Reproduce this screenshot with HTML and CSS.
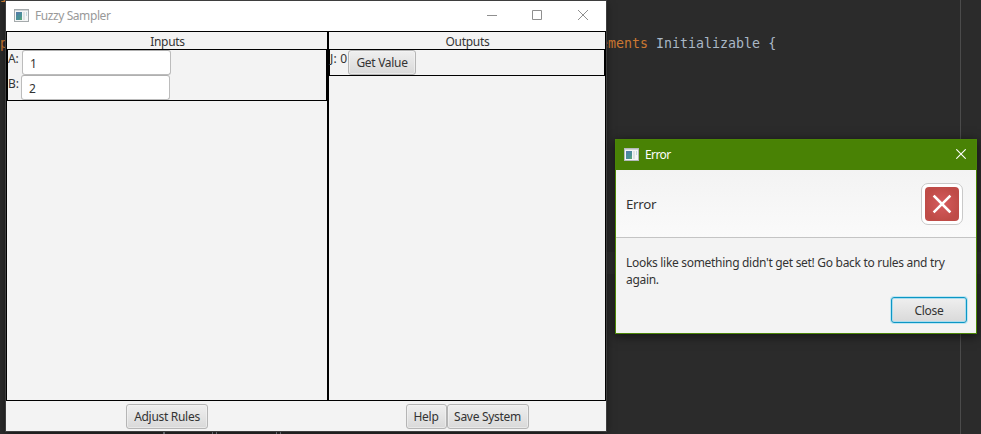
FILE: index.html
```html
<!DOCTYPE html>
<html lang="en">
<head>
<meta charset="utf-8">
<title>Fuzzy Sampler</title>
<link rel="stylesheet" href="styles.css">
</head>
<body>
<main class="desktop">
  <div class="margin-line"></div>
  <div class="code code-top">import</div>
  <div class="code code-left">p</div>
  <div class="code code-right"><span class="keyword">ements</span> Initializable {</div>
  <div class="caret-row"></div>
  <svg class="code-bottom" width="130" height="2" viewBox="0 0 130 2" fill="#858b91"><path d="M8 0h2v2H8zM57 0h1v2h-1zM61 0h1v2h-1zM121 0h1v2h-1zM125 0h1v2h-1z"/></svg>

  <section class="window sampler">
    <header class="titlebar">
      <svg class="app-icon" width="15" height="13" viewBox="0 0 15 13"><rect x=".5" y=".5" width="14" height="12" fill="#f5f6f6" stroke="#a5aaac"/><path d="M1 1.500h13" stroke="#d1d5d7"/><path d="M2 3h6v8H2z" fill="#4b8f98"/><path d="M2 3h6L2 7z" fill="#537fa5"/><path d="M5 11l3-4v4z" fill="#58a27c"/><path d="M9 3h2v8H9z" fill="#dfe3e4"/><path d="M12 3h1v4h-1z" fill="#c5dcdf"/></svg>
      <span class="caption">Fuzzy Sampler</span>
      <svg class="controls" width="102" height="12" viewBox="0 0 102 12" fill="none" stroke="#8f8f8f"><path d="M0 6.500h10M45.500 1.500h9v9h-9zM91 1l10 10M101 1L91 11"/></svg>
    </header>
    <div class="columns">
      <section class="column">
        <h2>Inputs</h2>
        <div class="box inputs">
          <label class="row"><span class="name-a">A:</span><input value="1"></label>
          <label class="row"><span class="name-b">B:</span><input value="2"></label>
        </div>
      </section>
      <section class="column">
        <h2>Outputs</h2>
        <div class="box outputs"><span class="result">J: 0</span><button class="get">Get Value</button></div>
      </section>
    </div>
    <footer class="actions">
      <div><button class="adjust">Adjust Rules</button></div>
      <div><button class="help">Help</button><button class="save">Save System</button></div>
    </footer>
  </section>

  <section class="window dialog">
    <header class="dialog-title">
      <svg class="app-icon" width="15" height="13" viewBox="0 0 15 13"><rect x=".5" y=".5" width="14" height="12" fill="#f5f6f6" stroke="#b5babc"/><path d="M1 1.500h13" stroke="#d1d5d7"/><path d="M2 3h6v8H2z" fill="#4b8f98"/><path d="M2 3h6L2 7z" fill="#537fa5"/><path d="M5 11l3-4v4z" fill="#58a27c"/><path d="M9 3h2v8H9z" fill="#dfe3e4"/><path d="M12 3h1v4h-1z" fill="#c5dcdf"/></svg>
      <span class="caption">Error</span>
      <svg class="close" width="10" height="10" viewBox="0 0 10 10" fill="none" stroke="#fff" stroke-width="1.1"><path d="M.3.3l9.400 9.400M9.700.3L.3 9.700"/></svg>
    </header>
    <div class="dialog-header">
      <span>Error</span>
      <svg width="42" height="42" viewBox="0 0 42 42"><defs><radialGradient id="red"><stop offset="0" stop-color="#d65b5e"/><stop offset="1" stop-color="#bf4b47"/></radialGradient></defs><rect x=".5" y=".5" width="41" height="41" rx="6.500" fill="#fff" stroke="#c9c9c9"/><rect x="4" y="4" width="34" height="34" rx="4" fill="url(#red)"/><path d="M13.500 13.500l15 15M28.500 13.500l-15 15" stroke="#fff" stroke-width="2.500" stroke-linecap="square"/></svg>
    </div>
    <div class="dialog-content"><p>Looks like something didn't get set! Go back to rules and try<br>again.</p><button class="dismiss">Close</button></div>
  </section>
</main>
</body>
</html>
```
FILE: styles.css
```css
* { box-sizing: border-box; }
body { margin: 0; overflow: hidden; background: #2b2b2b; }
.desktop { position: relative; width: 981px; height: 434px; overflow: hidden; font: 12px/16px "Noto Sans", "Open Sans", sans-serif; color: #333; letter-spacing: -.3px; }
.margin-line { position: absolute; left: 960px; top: 0; width: 1px; height: 434px; background: #4b4b4b; }
.caret-row { position: absolute; left: 607px; top: 252px; width: 374px; height: 22px; background: #303030; }
.code { position: absolute; font: 13.3px/20px "DejaVu Sans Mono", monospace; letter-spacing: 0; color: #a9b7c6; white-space: pre; }
.keyword, .code-top, .code-left { color: #cc7832; }
.code-top { left: 0; top: -12px; }
.code-left { left: 0; top: 34px; }
.code-right { left: 600px; top: 34px; }
.code-bottom { position: absolute; left: 155px; top: 432px; }
.window { position: absolute; display: flex; flex-direction: column; }
.sampler { left: 6px; top: 1px; width: 600px; height: 430px; background: #f3f3f3; box-shadow: 0 0 0 1px #3e3e3e, 0 2px 8px #0008; }
.titlebar { height: 30px; background: #fff; display: flex; align-items: center; padding: 0 17px 2px 8px; color: #999; }
.app-icon { flex: none; }
.caption { margin: 1px 0 -1px 6px; white-space: nowrap; }
.titlebar .caption { letter-spacing: -.42px; }
.controls { margin-left: auto; }
.columns { display: flex; height: 370px; }
.column { width: 322px; border: 1px solid #000; }
.column + .column { width: 278px; }
h2 { margin: 0; height: 17px; font: inherit; line-height: 19px; text-align: center; padding-left: 1px; }
.box { border: 1px solid #000; }
.inputs { height: 52px; }
.outputs { height: 27px; display: flex; }
.row { display: flex; height: 25px; }
.name-a, .name-b, .result { flex: none; line-height: 18px; white-space: nowrap; letter-spacing: -.1px; }
.name-a { width: 14px; }
.name-b { width: 13px; }
.result { width: 18px; letter-spacing: .25px; }
input { width: 149px; height: 25px; border: 1px solid #bcbcbc; border-top-color: #b0b0b0; border-radius: 3px; background: #fff; font: inherit; color: #333; padding: 1px 7px 0; outline: 0; }
button { flex: none; height: 25px; padding: 1px 0 0; border: 1px solid #b5b5b5; border-radius: 3px; background: linear-gradient(#efefef, #d9d9d9); box-shadow: inset 0 0 0 1px #f5f5f588; font: inherit; letter-spacing: inherit; color: #333; white-space: nowrap; display: flex; align-items: center; justify-content: center; }
.get { width: 68px; }
.actions { display: flex; height: 30px; }
.actions > div { display: flex; justify-content: center; width: 322px; padding-top: 3px; }
.actions > div + div { width: 278px; }
.adjust { width: 82px; }
.help { width: 41px; }
.save { width: 82px; }
.dialog { left: 615px; top: 139px; width: 362px; height: 195px; border: 1px solid #4b8606; background: #f3f3f3; box-shadow: 0 2px 10px #0009; }
.dialog-title { display: flex; align-items: center; height: 30px; padding: 0 10px 2px 8px; background: #498205; color: #fff; letter-spacing: -.6px; }
.close { margin-left: auto; }
.dialog-header { display: flex; align-items: center; justify-content: space-between; height: 68px; padding: 0 13px 0 10px; font-size: 13.3px; background: linear-gradient(#f3f3f3, #fafafa); border-bottom: 1px solid #c4c4c4; }
.dialog-content { display: flex; flex-direction: column; align-items: flex-end; padding: 16px 9px 0 10px; }
p { margin: 0; width: 100%; line-height: 17px; white-space: nowrap; }
.dismiss { width: 76px; height: 26px; margin-top: 9px; border-color: #0c96c4; box-shadow: 0 0 0 1px #bee6f2, inset 0 0 0 1px #a9dcee; }
```
